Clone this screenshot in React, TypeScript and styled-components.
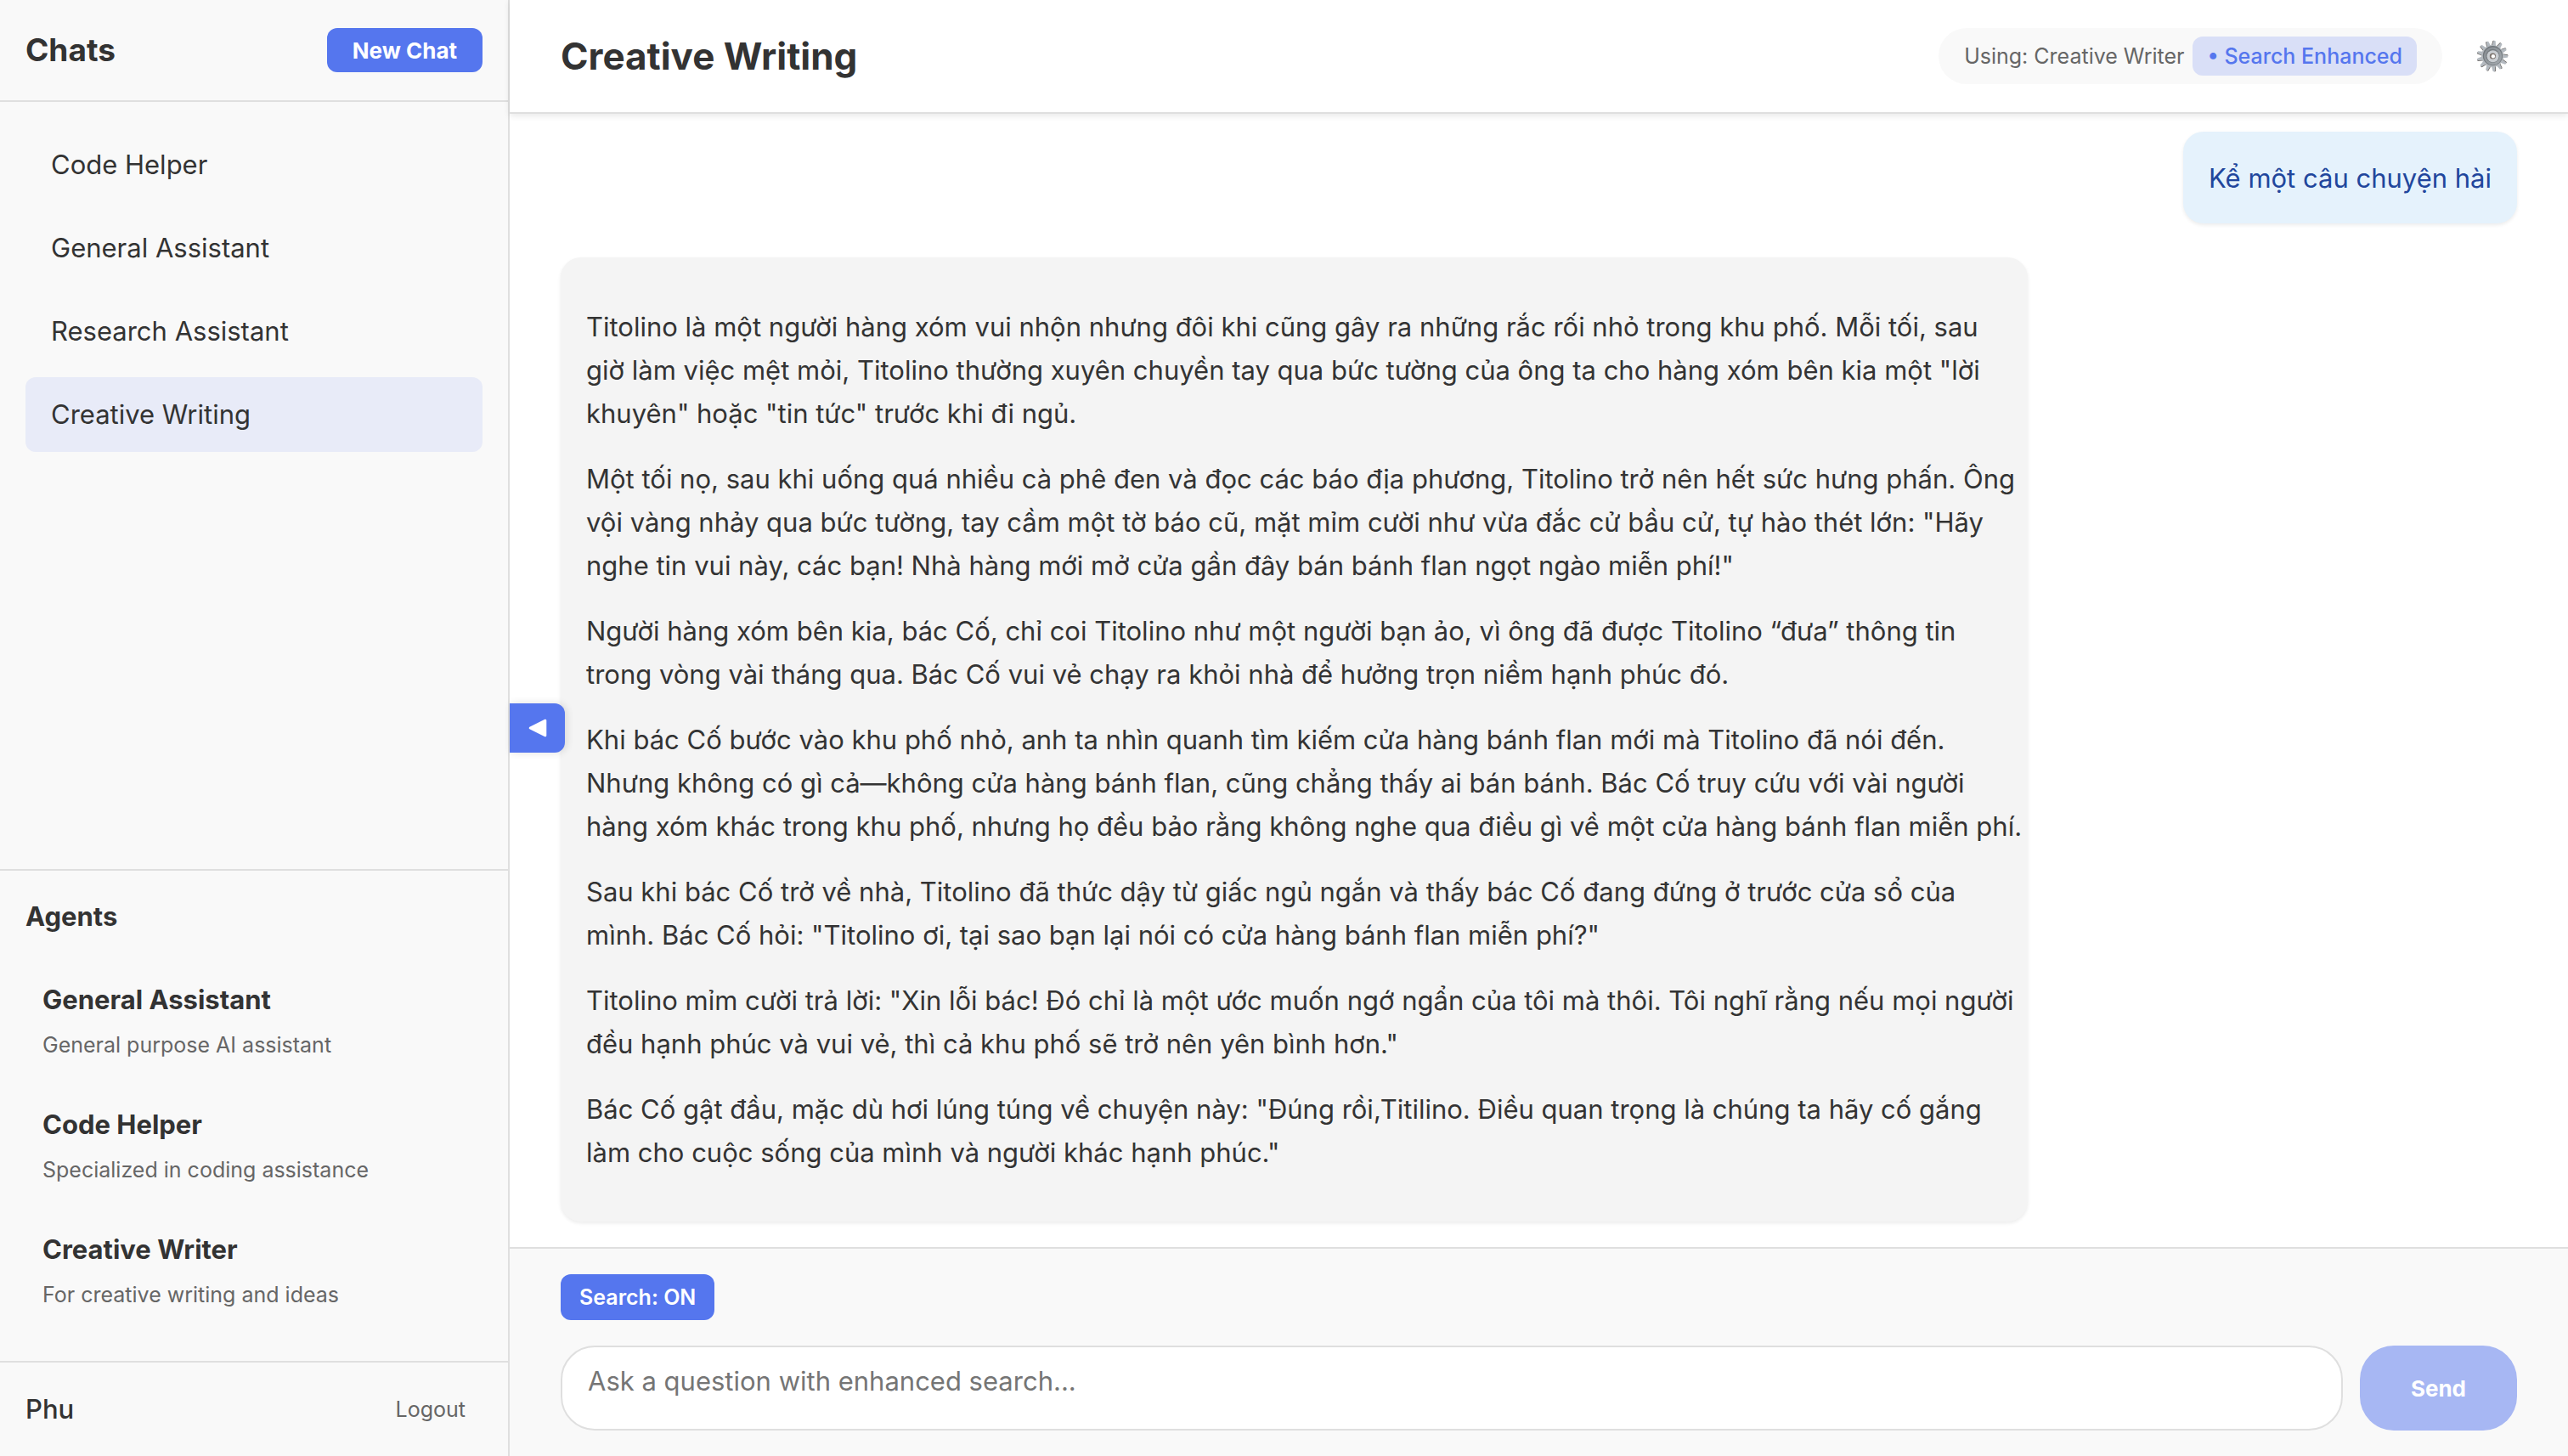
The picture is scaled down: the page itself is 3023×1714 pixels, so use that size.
import React from "react";
import styled, { createGlobalStyle } from "styled-components";

const color = {
  accent: "#5576ee",
  text: "#333333",
  muted: "#666666",
  border: "#dfdfdf",
  panel: "#f9f9f9",
};

const GlobalStyle = createGlobalStyle`
  *, *::before, *::after { box-sizing: border-box; }
  html, body, #root { height: 100%; }
  body {
    margin: 0;
    color: ${color.text};
    background: #ffffff;
    font-family: Inter, "Noto Sans", sans-serif;
    font-size: 31px;
    line-height: 48px;
  }
  button, textarea { font-family: inherit; margin: 0; }
  button { cursor: pointer; }
`;

const Page = styled.div`
  display: grid;
  grid-template-columns: 600px minmax(0, 1fr);
  grid-template-rows: minmax(0, 1fr);
  height: 100%;
`;

const Sidebar = styled.aside`
  display: flex;
  flex-direction: column;
  background: ${color.panel};
  border-right: 2px solid ${color.border};
`;

const SidebarHeader = styled.div`
  display: flex;
  align-items: center;
  justify-content: space-between;
  height: 120px;
  padding: 0 30px;
  border-bottom: 2px solid ${color.border};
`;

const SidebarTitle = styled.h2`
  margin: 0;
  font-size: 37px;
  font-weight: 700;
`;

const Button = styled.button<{ $size: "small" | "medium" }>`
  padding: ${(p) => (p.$size === "small" ? "0 22px" : "0 30px")};
  height: ${(p) => (p.$size === "small" ? "54px" : "52px")};
  border: 0;
  border-radius: 12px;
  background: ${color.accent};
  color: #ffffff;
  font-size: ${(p) => (p.$size === "small" ? "25px" : "26px")};
  font-weight: ${(p) => (p.$size === "small" ? 600 : 700)};
`;

const ChatList = styled.nav`
  display: flex;
  flex: 1;
  flex-direction: column;
  gap: 10px;
  min-height: 0;
  padding: 30px;
`;

const ChatItem = styled.button<{ $active: boolean }>`
  padding: 20px 30px;
  border: 0;
  border-radius: 12px;
  background: ${(p) => (p.$active ? "#e8ebf8" : "transparent")};
  color: inherit;
  font-size: 31px;
  line-height: 48px;
  text-align: left;
`;

const Agents = styled.section`
  padding: 30px 30px 34px;
  border-top: 2px solid ${color.border};
`;

const AgentsTitle = styled.h3`
  margin: 0 0 24px;
  font-size: 31px;
  font-weight: 700;
`;

const AgentList = styled.ul`
  margin: 0;
  padding: 0;
  list-style: none;
`;

const Agent = styled.li`
  padding: 26px 20px 20px;
`;

const AgentName = styled.div`
  font-weight: 700;
`;

const AgentDescription = styled.div`
  margin-top: 5px;
  color: ${color.muted};
  font-size: 25px;
`;

const UserBar = styled.div`
  display: flex;
  align-items: center;
  justify-content: space-between;
  height: 112px;
  padding: 0 30px;
  border-top: 2px solid ${color.border};
`;

const UserName = styled.span`
  font-weight: 500;
`;

const LogoutButton = styled.button`
  padding: 10px 20px;
  border: 0;
  background: transparent;
  color: ${color.muted};
  font-size: 25px;
`;

const Main = styled.main`
  position: relative;
  display: flex;
  flex-direction: column;
  min-width: 0;
`;

const MainHeader = styled.header`
  position: relative;
  display: flex;
  align-items: center;
  justify-content: space-between;
  height: 134px;
  padding: 0 60px;
  background: #ffffff;
  border-bottom: 2px solid ${color.border};
  box-shadow: 0 2px 8px rgba(0, 0, 0, 0.1);
`;

const Title = styled.h1`
  margin: 0;
  font-size: 44px;
  font-weight: 700;
  line-height: 60px;
`;

const HeaderTools = styled.div`
  display: flex;
  align-items: center;
  gap: 30px;
`;

const AgentPill = styled.div`
  display: flex;
  align-items: center;
  gap: 10px;
  padding: 10px 30px;
  border-radius: 33px;
  background: ${color.panel};
  color: ${color.muted};
  font-size: 25px;
  line-height: 46px;
`;

const SearchBadge = styled.span`
  padding: 0 17px;
  border-radius: 12px;
  background: #d9dff7;
  color: ${color.accent};
  font-weight: 500;
`;

const SettingsButton = styled.button`
  display: flex;
  padding: 10px;
  border: 0;
  background: transparent;
`;

const Messages = styled.div`
  display: flex;
  flex: 1;
  flex-direction: column;
  gap: 40px;
  min-height: 0;
  padding: 20px 60px 30px;
  overflow: hidden;

  & > :first-child {
    margin-top: auto;
  }
`;

const Bubble = styled.article<{ $own: boolean }>`
  flex-shrink: 0;
  align-self: ${(p) => (p.$own ? "flex-end" : "flex-start")};
  width: ${(p) => (p.$own ? "auto" : "75%")};
  max-width: 75%;
  padding: ${(p) => (p.$own ? "29px 30px 28px" : "56px 2px 56px 30px")};
  border-radius: 24px;
  background: ${(p) => (p.$own ? "#e5f2fc" : "#f4f4f4")};
  box-shadow: 0 2px 4px rgba(0, 0, 0, 0.08);
  color: ${(p) => (p.$own ? "#21469c" : "inherit")};
  font-size: 31px;
  line-height: 51px;
`;

const Paragraph = styled.p`
  margin: 0;
  white-space: pre-line;

  & + & {
    margin-top: 26px;
  }
`;

const Composer = styled.form`
  display: flex;
  flex-direction: column;
  align-items: flex-start;
  gap: 30px;
  padding: 30px 60px;
  border-top: 2px solid ${color.border};
  background: ${color.panel};
`;

const InputRow = styled.div`
  display: flex;
  gap: 20px;
  width: 100%;
`;

const MessageInput = styled.textarea`
  flex: 1;
  height: 100px;
  padding: 18px 30px;
  border: 2px solid ${color.border};
  border-radius: 40px;
  background: #ffffff;
  font-size: 31px;
  line-height: 44px;
  resize: none;

  &::placeholder {
    color: #757575;
    opacity: 1;
  }
`;

const SendButton = styled.button`
  padding: 0 60px;
  border: 0;
  border-radius: 40px;
  background: #a7b7f3;
  color: #ffffff;
  font-size: 26px;
  font-weight: 700;
`;

const CollapseButton = styled.button`
  position: absolute;
  top: 50%;
  left: 0;
  display: flex;
  align-items: center;
  justify-content: center;
  width: 65px;
  height: 58px;
  padding: 0;
  border: 0;
  border-radius: 0 12px 12px 0;
  background: ${color.accent};
  box-shadow: 2px 0 10px rgba(0, 0, 0, 0.12);
  transform: translateY(-50%);
`;

const chats = ["Code Helper", "General Assistant", "Research Assistant", "Creative Writing"];

const agents = [
  { name: "General Assistant", description: "General purpose AI assistant" },
  { name: "Code Helper", description: "Specialized in coding assistance" },
  { name: "Creative Writer", description: "For creative writing and ideas" },
];

const story = [
  `Titolino là một người hàng xóm vui nhộn nhưng đôi khi cũng gây ra những rắc rối nhỏ trong khu phố. Mỗi tối, sau
giờ làm việc mệt mỏi, Titolino thường xuyên chuyền tay qua bức tường của ông ta cho hàng xóm bên kia một "lời
khuyên" hoặc "tin tức" trước khi đi ngủ.`,
  `Một tối nọ, sau khi uống quá nhiều cà phê đen và đọc các báo địa phương, Titolino trở nên hết sức hưng phấn. Ông
vội vàng nhảy qua bức tường, tay cầm một tờ báo cũ, mặt mỉm cười như vừa đắc cử bầu cử, tự hào thét lớn: "Hãy
nghe tin vui này, các bạn! Nhà hàng mới mở cửa gần đây bán bánh flan ngọt ngào miễn phí!"`,
  `Người hàng xóm bên kia, bác Cố, chỉ coi Titolino như một người bạn ảo, vì ông đã được Titolino “đưa” thông tin
trong vòng vài tháng qua. Bác Cố vui vẻ chạy ra khỏi nhà để hưởng trọn niềm hạnh phúc đó.`,
  `Khi bác Cố bước vào khu phố nhỏ, anh ta nhìn quanh tìm kiếm cửa hàng bánh flan mới mà Titolino đã nói đến.
Nhưng không có gì cả—không cửa hàng bánh flan, cũng chẳng thấy ai bán bánh. Bác Cố truy cứu với vài người
hàng xóm khác trong khu phố, nhưng họ đều bảo rằng không nghe qua điều gì về một cửa hàng bánh flan miễn phí.`,
  `Sau khi bác Cố trở về nhà, Titolino đã thức dậy từ giấc ngủ ngắn và thấy bác Cố đang đứng ở trước cửa sổ của
mình. Bác Cố hỏi: "Titolino ơi, tại sao bạn lại nói có cửa hàng bánh flan miễn phí?"`,
  `Titolino mỉm cười trả lời: "Xin lỗi bác! Đó chỉ là một ước muốn ngớ ngẩn của tôi mà thôi. Tôi nghĩ rằng nếu mọi người
đều hạnh phúc và vui vẻ, thì cả khu phố sẽ trở nên yên bình hơn."`,
  `Bác Cố gật đầu, mặc dù hơi lúng túng về chuyện này: "Đúng rồi,Titilino. Điều quan trọng là chúng ta hãy cố gắng
làm cho cuộc sống của mình và người khác hạnh phúc."`,
];

function GearIcon() {
  const teeth = Array.from({ length: 13 }, (_, i) => (i * 360) / 13 + 8);
  return (
    <svg width="38" height="38" viewBox="0 0 38 38" aria-hidden="true">
      <defs>
        <linearGradient id="gear-face" x1="0" y1="0" x2="1" y2="1">
          <stop offset="0" stopColor="#868c91" />
          <stop offset="1" stopColor="#a3a9ae" />
        </linearGradient>
      </defs>
      {teeth.map((angle) => (
        <g key={angle} transform={`rotate(${angle} 19 19)`}>
          <path d="M16 8 17 1Q18 .2 19.2 1L21 8Z" fill="#5f5a56" />
          <path d="M16.6 8 17.7 1.2Q19 .2 20.3 1.2L21.4 8Z" fill="#b4bac0" />
        </g>
      ))}
      <circle cx="19" cy="19" r="13" fill="#b3b8bd" />
      <circle cx="19.4" cy="18.6" r="11.6" fill="#6f757a" />
      <circle cx="19.6" cy="19" r="10.6" fill="url(#gear-face)" />
      <circle cx="19.4" cy="18.8" r="8" fill="#767c81" />
      <circle cx="19.6" cy="19.2" r="7" fill="#c9cdd1" />
      <circle cx="19.4" cy="19" r="3.6" fill="#7d746e" />
      <circle cx="19.9" cy="19.2" r="2.2" fill="#ffffff" />
    </svg>
  );
}

export default function App() {
  return (
    <>
      <GlobalStyle />
      <Page>
        <Sidebar>
          <SidebarHeader>
            <SidebarTitle>Chats</SidebarTitle>
            <Button type="button" $size="medium">New Chat</Button>
          </SidebarHeader>
          <ChatList aria-label="Chats">
            {chats.map((name) => (
              <ChatItem key={name} type="button" $active={name === "Creative Writing"}>
                {name}
              </ChatItem>
            ))}
          </ChatList>
          <Agents>
            <AgentsTitle>Agents</AgentsTitle>
            <AgentList>
              {agents.map((agent) => (
                <Agent key={agent.name}>
                  <AgentName>{agent.name}</AgentName>
                  <AgentDescription>{agent.description}</AgentDescription>
                </Agent>
              ))}
            </AgentList>
          </Agents>
          <UserBar>
            <UserName>Phu</UserName>
            <LogoutButton type="button">Logout</LogoutButton>
          </UserBar>
        </Sidebar>

        <Main>
          <MainHeader>
            <Title>Creative Writing</Title>
            <HeaderTools>
              <AgentPill>
                <span>Using: Creative Writer</span>
                <SearchBadge>• Search Enhanced</SearchBadge>
              </AgentPill>
              <SettingsButton type="button" aria-label="Settings">
                <GearIcon />
              </SettingsButton>
            </HeaderTools>
          </MainHeader>

          <Messages>
            <Bubble $own>
              <Paragraph>Kể một câu chuyện hài</Paragraph>
            </Bubble>
            <Bubble $own={false}>
              {story.map((text) => (
                <Paragraph key={text}>{text}</Paragraph>
              ))}
            </Bubble>
          </Messages>

          <Composer onSubmit={(event) => event.preventDefault()}>
            <Button type="button" $size="small">Search: ON</Button>
            <InputRow>
              <MessageInput
                aria-label="Message"
                placeholder="Ask a question with enhanced search..."
              />
              <SendButton type="submit">Send</SendButton>
            </InputRow>
          </Composer>

          <CollapseButton type="button" aria-label="Collapse sidebar">
            <svg width="22" height="22" viewBox="0 0 22 22" aria-hidden="true">
              <path
                d="M2 11 20 2V20Z"
                fill="#ffffff"
                stroke="#ffffff"
                strokeWidth="2.6"
                strokeLinejoin="round"
              />
            </svg>
          </CollapseButton>
        </Main>
      </Page>
    </>
  );
}
